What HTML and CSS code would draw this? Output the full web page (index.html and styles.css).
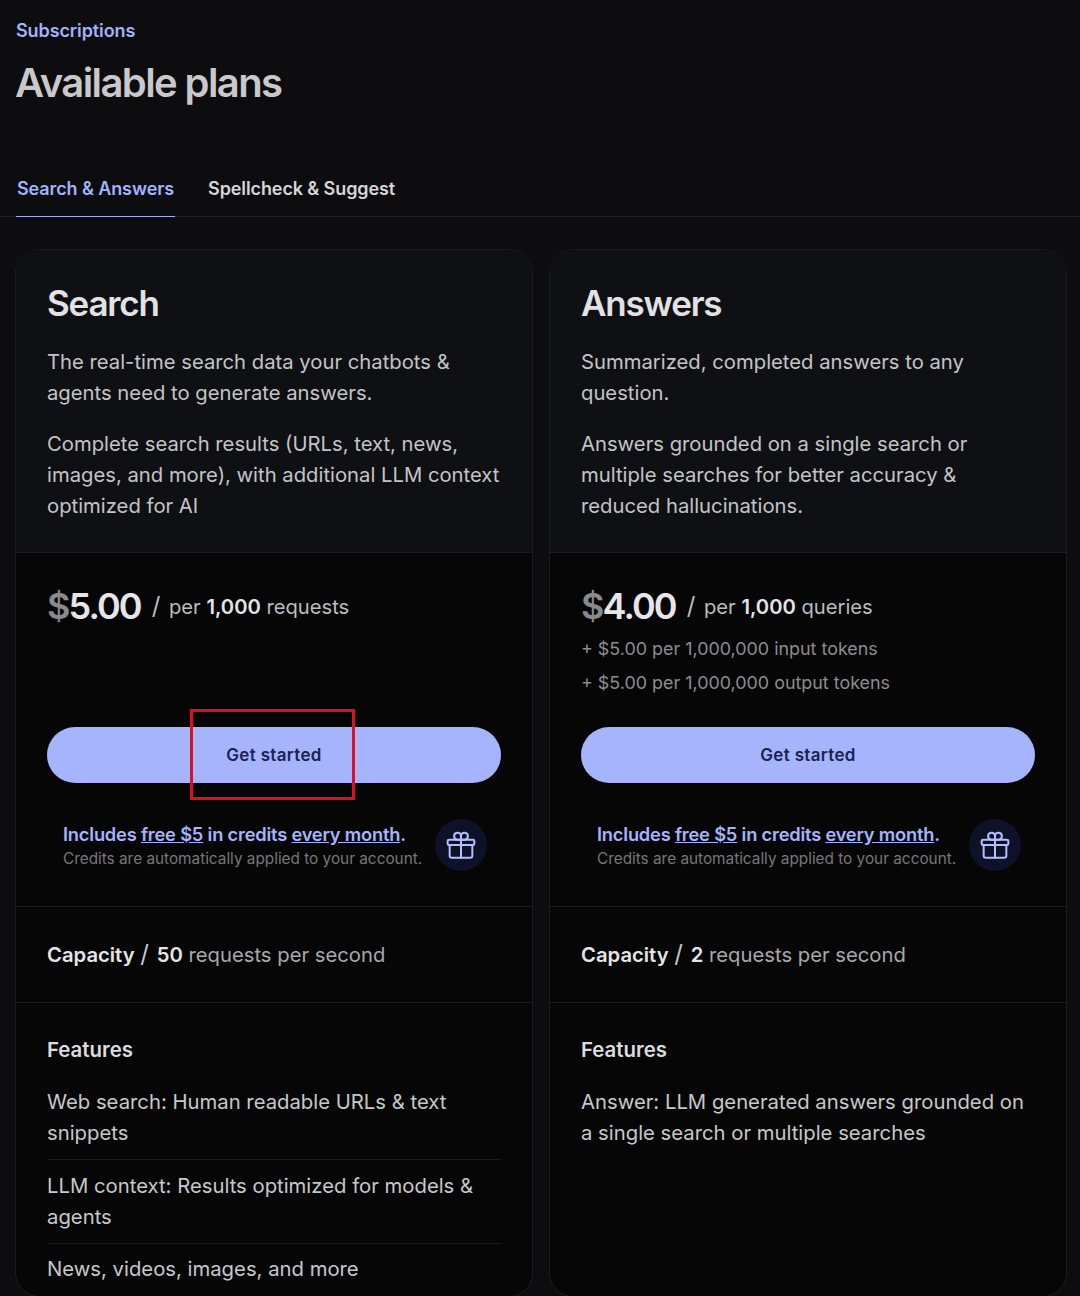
FILE: index.html
```html
<!DOCTYPE html>
<html lang="en">
<head>
    <meta charset="UTF-8">
    <meta name="viewport" content="width=device-width, initial-scale=1.0">
    <title>Available plans</title>
    <link rel="stylesheet" href="styles.css">
</head>
<body>

    <div class="page-head">
        <div class="eyebrow">Subscriptions</div>
        <h1>Available plans</h1>
    </div>

    <div class="tabs">
        <div class="tab active">Search &amp; Answers</div>
        <div class="tab">Spellcheck &amp; Suggest</div>
    </div>

    <div class="plans">
        <div class="plan">
            <div class="plan-intro">
                <h2>Search</h2>
                <p>The real-time search data your chatbots &amp; agents need to generate answers.</p>
                <p>Complete search results (URLs, text, news, images, and more), with additional LLM context optimized for AI</p>
            </div>
            <div class="plan-price">
                <div class="price-line">
                    <span class="amount"><span class="dollar">$</span>5.00</span>
                    <span class="unit"><span class="slash">/</span> per <b>1,000</b> requests</span>
                </div>
                <div class="extras"></div>
                <div class="cta-wrap">
                    <button class="cta">Get started</button>
                    <div class="highlight"></div>
                </div>
                <div class="credits">
                    <div class="credits-text">
                        <div class="credits-title">Includes <u>free $5</u> in credits <u>every month</u>.</div>
                        <div class="credits-note">Credits are automatically applied to your account.</div>
                    </div>
                    <div class="gift">
                        <svg width="32" height="32" viewBox="0 0 24 24" fill="none" stroke="currentColor" stroke-width="1.5" stroke-linecap="round" stroke-linejoin="round">
                            <rect x="2" y="8" width="20" height="4" rx="1"/>
                            <path d="M3.5 12v8a1.5 1.5 0 0 0 1.5 1.5h14a1.5 1.5 0 0 0 1.5-1.5v-8"/>
                            <path d="M12 8v13.5"/>
                            <path d="M12 8V5a2.6 2.6 0 1 0-2.6 3H12"/>
                            <path d="M12 8V5a2.6 2.6 0 1 1 2.6 3H12"/>
                        </svg>
                    </div>
                </div>
            </div>
            <div class="plan-capacity"><b>Capacity</b> <span class="slash">/</span> <b>50</b> requests per second</div>
            <div class="plan-features">
                <h3>Features</h3>
                <ul>
                    <li>Web search: Human readable URLs &amp; text snippets</li>
                    <li>LLM context: Results optimized for models &amp; agents</li>
                    <li>News, videos, images, and more</li>
                </ul>
            </div>
        </div>

        <div class="plan">
            <div class="plan-intro">
                <h2>Answers</h2>
                <p>Summarized, completed answers to any question.</p>
                <p>Answers grounded on a single search or multiple searches for better accuracy &amp; reduced hallucinations.</p>
            </div>
            <div class="plan-price">
                <div class="price-line">
                    <span class="amount"><span class="dollar">$</span>4.00</span>
                    <span class="unit"><span class="slash">/</span> per <b>1,000</b> queries</span>
                </div>
                <div class="extras">
                    <div>+ $5.00 per 1,000,000 input tokens</div>
                    <div>+ $5.00 per 1,000,000 output tokens</div>
                </div>
                <div class="cta-wrap">
                    <button class="cta">Get started</button>
                </div>
                <div class="credits">
                    <div class="credits-text">
                        <div class="credits-title">Includes <u>free $5</u> in credits <u>every month</u>.</div>
                        <div class="credits-note">Credits are automatically applied to your account.</div>
                    </div>
                    <div class="gift">
                        <svg width="32" height="32" viewBox="0 0 24 24" fill="none" stroke="currentColor" stroke-width="1.5" stroke-linecap="round" stroke-linejoin="round">
                            <rect x="2" y="8" width="20" height="4" rx="1"/>
                            <path d="M3.5 12v8a1.5 1.5 0 0 0 1.5 1.5h14a1.5 1.5 0 0 0 1.5-1.5v-8"/>
                            <path d="M12 8v13.5"/>
                            <path d="M12 8V5a2.6 2.6 0 1 0-2.6 3H12"/>
                            <path d="M12 8V5a2.6 2.6 0 1 1 2.6 3H12"/>
                        </svg>
                    </div>
                </div>
            </div>
            <div class="plan-capacity"><b>Capacity</b> <span class="slash">/</span> <b>2</b> requests per second</div>
            <div class="plan-features">
                <h3>Features</h3>
                <ul>
                    <li>Answer: LLM generated answers grounded on a single search or multiple searches</li>
                </ul>
            </div>
        </div>
    </div>

</body>
</html>
```

FILE: styles.css
```css
html, body {
    height: 1296px;
    overflow: hidden;
}
body {
    margin: 0;
    background-color: #0d0d0f;
    color: #d4d4d6;
    font-family: Inter, "Liberation Sans", sans-serif;
    font-size: 20px;
}
.page-head {
    padding: 20px 15px 0;
}
.eyebrow {
    padding-left: 1px;
    color: #a3b2fc;
    font-size: 18px;
    font-weight: 600;
    line-height: 21px;
    letter-spacing: -0.1px;
}
h1 {
    margin: 18px 0 0;
    color: #c9c9cb;
    font-size: 40px;
    font-weight: 600;
    line-height: 48px;
    letter-spacing: -1.6px;
}
.tabs {
    display: flex;
    gap: 32px;
    margin-top: 71px;
    padding-left: 16px;
    border-bottom: 1px solid #1e1f22;
}
.tab {
    padding: 0 1px 16px;
    margin-bottom: -1px;
    color: #d6d6d8;
    font-size: 18px;
    font-weight: 600;
    line-height: 22px;
    letter-spacing: -0.1px;
    border-bottom: 1px solid transparent;
}
.tab.active {
    color: #a3b2fc;
    border-bottom-color: #a3b2fc;
}
.plans {
    display: grid;
    grid-template-columns: 518px 518px;
    gap: 16px;
    margin-top: 32px;
    padding-left: 15px;
}
.plan {
    height: 1048px;
    box-sizing: border-box;
    background-color: #060607;
    border: 1px solid #1b1c20;
    border-radius: 24px;
    overflow: hidden;
}
.plan-intro {
    height: 303px;
    box-sizing: border-box;
    padding: 30px 31px 0;
    background-color: #0f1014;
    border-bottom: 1px solid #1b1c20;
}
h2 {
    margin: 0 0 20px;
    color: #e2e2e4;
    font-size: 35px;
    font-weight: 600;
    line-height: 46px;
    letter-spacing: -1.2px;
}
.plan-intro p {
    margin: 0 0 20px;
    color: #c4c4c7;
    font-size: 20.25px;
    line-height: 31px;
}
.plan-price {
    height: 354px;
    box-sizing: border-box;
    padding: 29px 31px 0;
    border-bottom: 1px solid #1b1c20;
}
.price-line {
    display: flex;
    align-items: center;
    gap: 11px;
    height: 48px;
}
.amount {
    color: #e6e6e8;
    font-size: 36px;
    font-weight: 600;
    letter-spacing: -1.9px;
}
.dollar {
    color: #8a8a8c;
}
.unit {
    color: #bcbcbf;
    font-size: 20.2px;
}
.unit b, .plan-capacity b {
    color: #e4e4e6;
    font-weight: 600;
}
.slash {
    margin-right: 2px;
    font-size: 24px;
    line-height: 1;
}
.unit .slash {
    margin-right: 3px;
}
.extras {
    height: 97px;
    padding-top: 2px;
    box-sizing: border-box;
    color: #8c8c90;
    font-size: 17.9px;
    line-height: 33.5px;
}
.cta-wrap {
    position: relative;
}
.cta {
    display: block;
    width: 100%;
    height: 56px;
    border: none;
    border-radius: 28px;
    background-color: #a5b4fc;
    color: #1a2352;
    font-family: inherit;
    font-size: 17px;
    font-weight: 600;
    letter-spacing: 0.35px;
    cursor: pointer;
}
.highlight {
    position: absolute;
    left: 143px;
    top: -18px;
    width: 165px;
    height: 91px;
    box-sizing: border-box;
    border: 3px solid #dc1024;
}
.credits {
    display: flex;
    align-items: center;
    justify-content: space-between;
    margin-top: 36px;
    padding: 0 14px 0 16px;
}
.credits-text {
    padding-top: 2px;
}
.credits-title {
    color: #a5b4fc;
    font-size: 18.3px;
    font-weight: 600;
    line-height: 26px;
    letter-spacing: -0.2px;
}
.credits-note {
    color: #77777b;
    font-size: 15.33px;
    line-height: 24px;
}
.gift {
    display: flex;
    align-items: center;
    justify-content: center;
    width: 52px;
    height: 52px;
    border-radius: 50%;
    background-color: #0e1128;
    color: #b4c0fc;
}
.plan-capacity {
    height: 96px;
    box-sizing: border-box;
    padding: 0 31px;
    line-height: 95px;
    color: #a8a8ab;
    font-size: 20.25px;
    border-bottom: 1px solid #1b1c20;
}
.plan-capacity .slash {
    color: #c8c8ca;
}
.plan-features {
    padding: 30px 31px 0;
}
h3 {
    margin: 0 0 19px;
    color: #dcdcde;
    font-size: 20.4px;
    font-weight: 600;
    line-height: 34px;
}
ul {
    margin: 0;
    padding: 0;
    list-style: none;
}
li {
    padding: 10px 0 11px;
    color: #c8c8ca;
    font-size: 20.3px;
    line-height: 31px;
    border-bottom: 1px solid #1b1c20;
}
li:last-child {
    padding-top: 9px;
    border-bottom: none;
}
li:first-child {
    padding-top: 1px;
    padding-bottom: 11px;
    line-height: 30.5px;
}
```
